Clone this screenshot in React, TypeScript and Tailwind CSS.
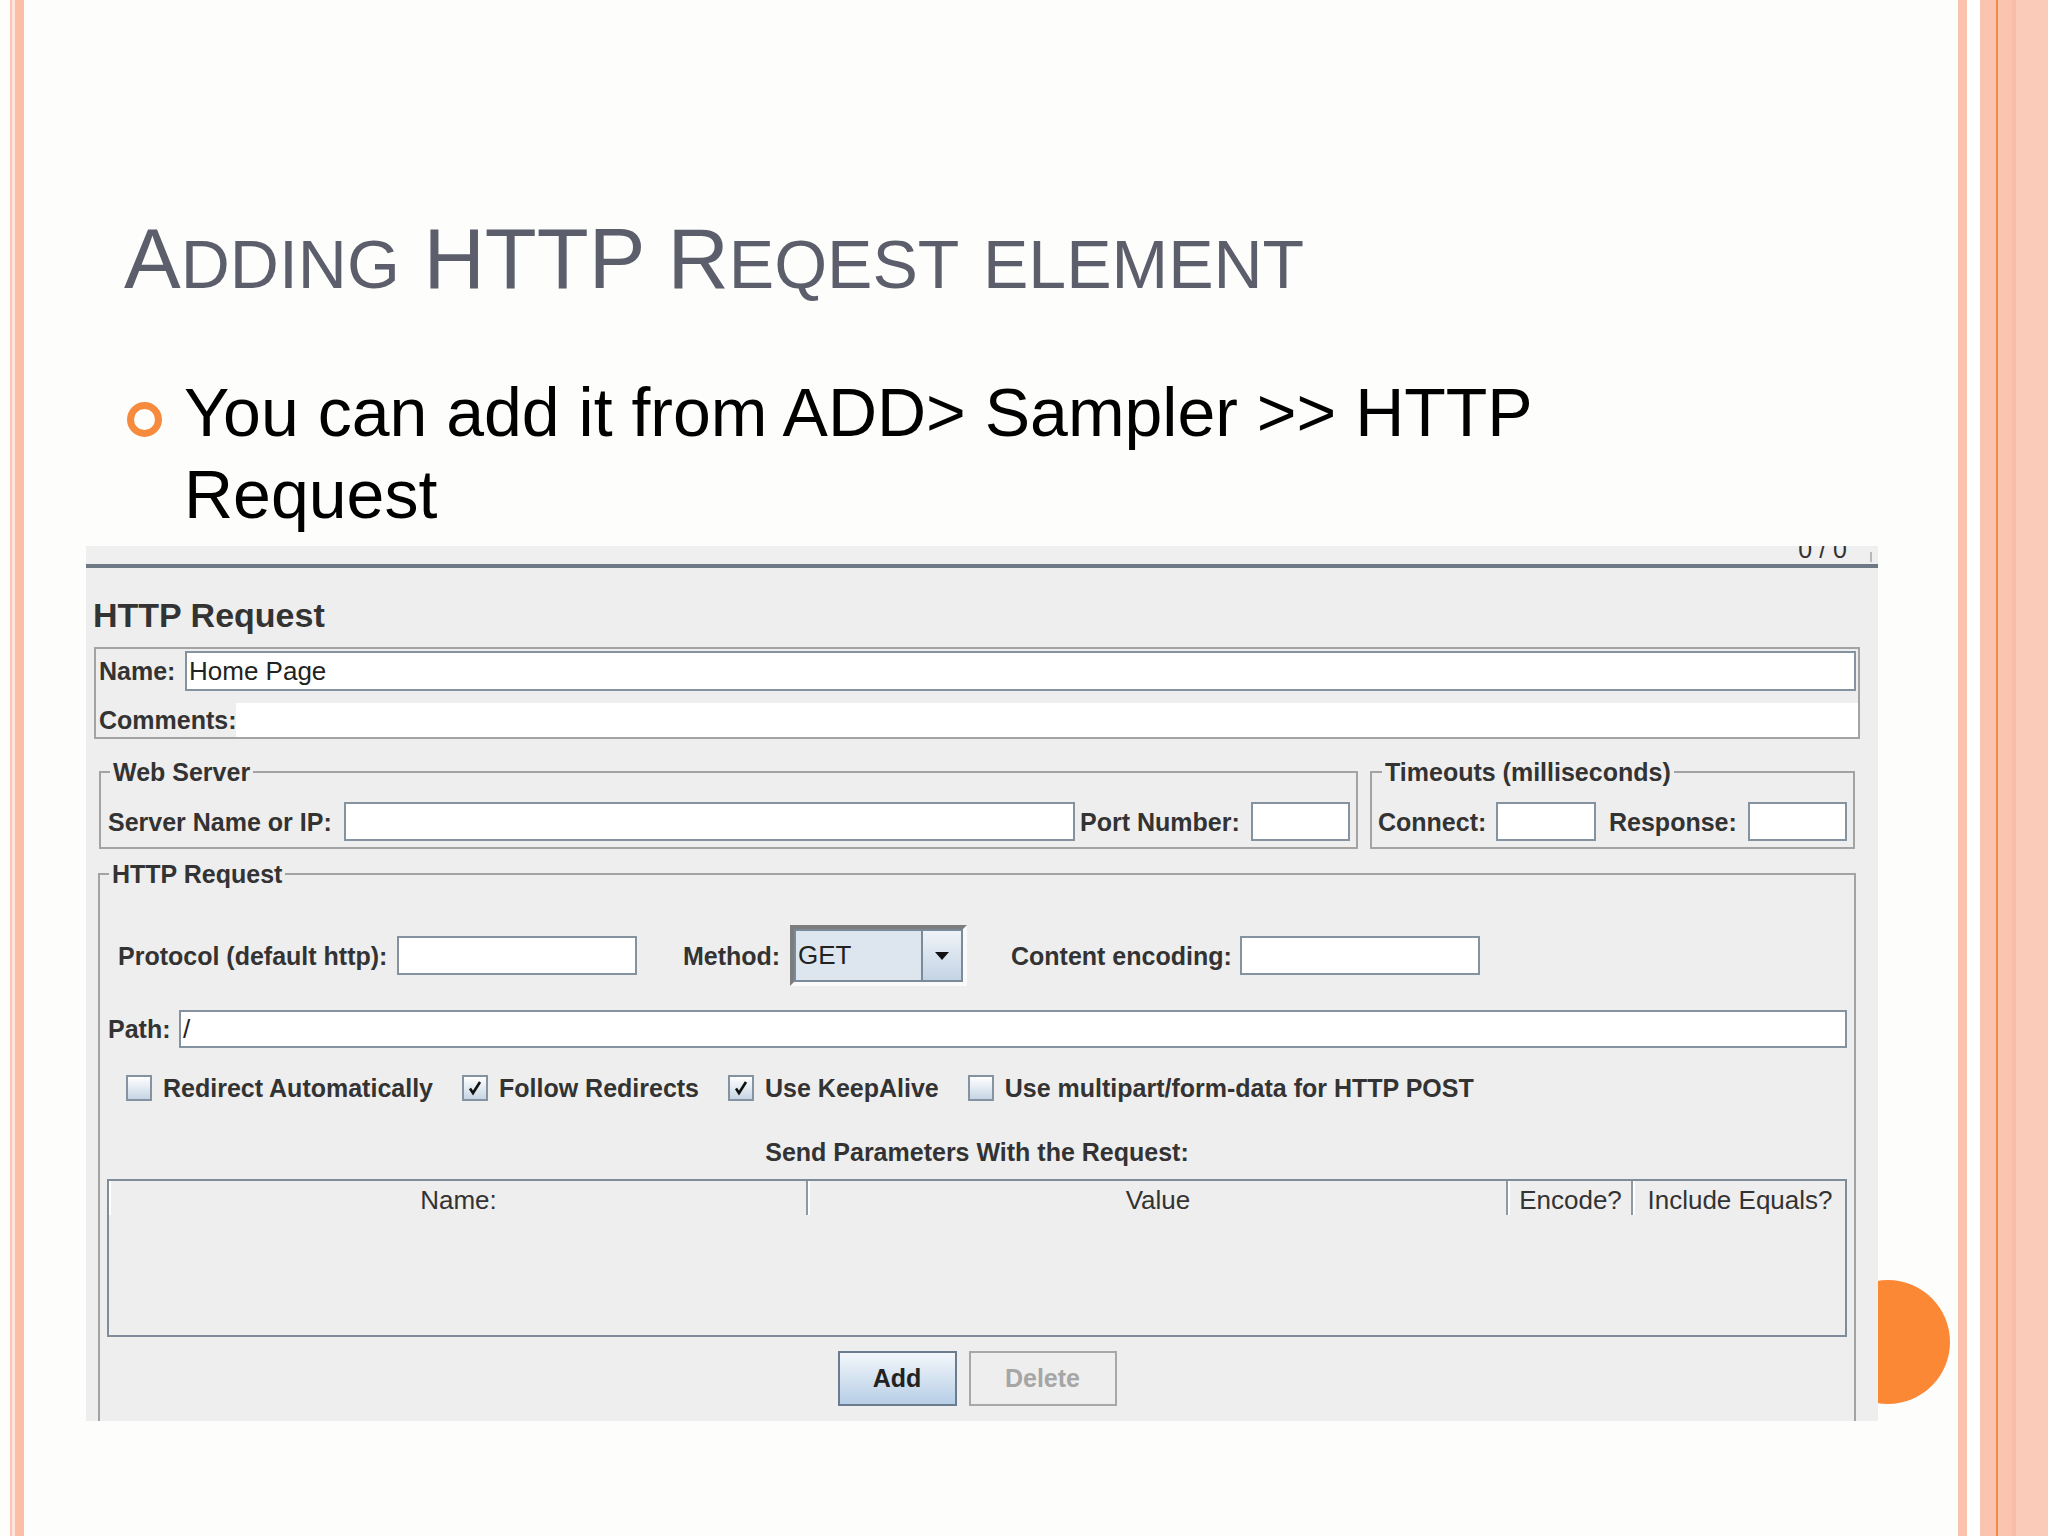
import React from "react";

const label = "text-[25px] font-bold text-[#333] leading-[30px] whitespace-nowrap";
const field = "bg-white border-2 border-[#8592a0]";

function CheckBox({ checked, text }: { checked?: boolean; text: string }) {
  return (
    <div className="flex items-center gap-[11px]">
      <div className="w-[26px] h-[26px] border-2 border-[#8592a0] bg-linear-to-b from-white to-[#c6d5e4] flex items-center justify-center">
        {checked && (
          <svg viewBox="0 0 22 22" className="w-[22px] h-[22px]">
            <path d="M6 11.5 L9 16 L16 5" stroke="#111" strokeWidth="2.6" fill="none" />
          </svg>
        )}
      </div>
      <span className={label}>{text}</span>
    </div>
  );
}

function Legend({ children, offset }: { children: React.ReactNode; offset: string }) {
  return <legend className={`${offset} px-[3px] ${label}`}>{children}</legend>;
}

function HeaderCell({ children, last }: { children: React.ReactNode; last?: boolean }) {
  return (
    <div
      className={`h-full flex items-center justify-center text-[26px] text-[#333] bg-[#eeeeee] border-l-2 border-l-white ${
        last ? "" : "border-r-2 border-r-[#8e99a4]"
      }`}
    >
      {children}
    </div>
  );
}

function JMeterPanel() {
  return (
    <div className="relative z-10 ml-[62px] mt-[11px] w-[1792px] h-[875px] shrink-0 overflow-hidden bg-[#eeeeee]">
      {/* cut-off toolbar strip */}
      <div className="h-[18px] flex justify-end overflow-hidden bg-[#efefef]">
        <span className="mt-[-9px] text-[25px] leading-none text-[#333]">0 / 0</span>
        <div className="ml-[23px] mt-[6px] w-[2px] h-[10px] bg-[#b9b9b9]" />
        <div className="w-[6px]" />
      </div>
      <div className="h-[4px] bg-[#6d7985]" />

      <h2 className="mt-[27px] pl-[7px] text-[34px] font-bold leading-[40px] text-[#333]">HTTP Request</h2>

      {/* name / comments */}
      <div className="mt-[12px] ml-[8px] mr-[18px] border-2 border-[#a3a3a3] pt-[2px]">
        <div className="flex items-center pr-[2px]">
          <span className={`${label} w-[89px] pl-[3px]`}>Name:</span>
          <div className={`${field} flex-1 h-[40px] flex items-center pl-[2px] text-[26px] text-[#222]`}>Home Page</div>
        </div>
        <div className="mt-[12px] flex items-center h-[34px]">
          <span className={`${label} w-[140px] pl-[3px]`}>Comments:</span>
          <div className="flex-1 h-full bg-white" />
        </div>
      </div>

      {/* web server + timeouts */}
      <div className="mt-[18px] ml-[13px] mr-[23px] flex gap-[12px]">
        <fieldset className="w-[1259px] border-2 border-[#a3a3a3] px-[6px] pb-[6px]">
          <Legend offset="ml-[3px]">Web Server</Legend>
          <div className="mt-[15px] flex items-center">
            <span className={`${label} w-[237px] pl-[1px]`}>Server Name or IP:</span>
            <div className={`${field} w-[731px] h-[39px]`} />
            <span className={`${label} ml-[5px] w-[171px]`}>Port Number:</span>
            <div className={`${field} w-[99px] h-[39px]`} />
          </div>
        </fieldset>
        <fieldset className="flex-1 border-2 border-[#a3a3a3] px-[6px] pb-[6px]">
          <Legend offset="ml-[4px]">Timeouts (milliseconds)</Legend>
          <div className="mt-[15px] flex items-center">
            <span className={`${label} w-[118px]`}>Connect:</span>
            <div className={`${field} w-[100px] h-[39px]`} />
            <span className={`${label} ml-[13px] w-[139px]`}>Response:</span>
            <div className={`${field} w-[99px] h-[39px]`} />
          </div>
        </fieldset>
      </div>

      {/* http request group */}
      <fieldset className="mt-[10px] ml-[12px] mr-[22px] border-2 border-b-0 border-[#a3a3a3] pb-[40px]">
        <Legend offset="ml-[9px]">HTTP Request</Legend>

        <div className="mt-[36px] pl-[18px] h-[61px] flex items-center">
          <span className={`${label} w-[279px]`}>Protocol (default http):</span>
          <div className={`${field} w-[240px] h-[39px]`} />
          <span className={`${label} ml-[46px] w-[107px]`}>Method:</span>
          <div className="w-[177px] h-[61px] border-[4px] border-t-[#7d7d7d] border-l-[#7d7d7d] border-b-[#fafafa] border-r-[#fafafa]">
            <div className="h-full flex border-2 border-[#7a8a99]">
              <div className="flex-1 bg-[#dde5ee] flex items-center pl-[2px] text-[26px] text-[#222]">GET</div>
              <div className="w-[40px] border-l-2 border-[#7a8a99] bg-linear-to-b from-[#eef3f8] to-[#c5d4e4] flex items-center justify-center">
                <svg viewBox="0 0 14 8" className="w-[14px] h-[8px]">
                  <path d="M0 0 H14 L7 8 Z" fill="#111" />
                </svg>
              </div>
            </div>
          </div>
          <span className={`${label} ml-[44px] w-[229px]`}>Content encoding:</span>
          <div className={`${field} w-[240px] h-[39px]`} />
        </div>

        <div className="mt-[24px] pl-[8px] pr-[7px] flex items-center">
          <span className={`${label} w-[71px]`}>Path:</span>
          <div className={`${field} flex-1 h-[38px] flex items-center pl-[2px] text-[26px] text-[#222]`}>/</div>
        </div>

        <div className="mt-[25px] pl-[26px] flex items-center gap-[29px]">
          <CheckBox text="Redirect Automatically" />
          <CheckBox checked text="Follow Redirects" />
          <CheckBox checked text="Use KeepAlive" />
          <CheckBox text="Use multipart/form-data for HTTP POST" />
        </div>

        <p className={`mt-[34px] text-center ${label}`}>Send Parameters With the Request:</p>

        <div className="mt-[12px] mx-[7px] h-[158px] flex flex-col border-2 border-t-0 border-[#7f8d9a]">
          <div className="h-[36px] shrink-0 grid grid-cols-[699px_700px_125px_1fr] border-t-2 border-b-[3px] border-[#7f8d9a]">
            <HeaderCell>Name:</HeaderCell>
            <HeaderCell>Value</HeaderCell>
            <HeaderCell>Encode?</HeaderCell>
            <HeaderCell last>Include Equals?</HeaderCell>
          </div>
          <div className="flex-1 bg-[#eeeeee]" />
        </div>

        <div className="mt-[14px] flex justify-center gap-[12px]">
          <button className="w-[119px] h-[55px] border-2 border-[#6a7d90] bg-linear-to-b from-[#f3f7fb] to-[#b7cee6] text-[25px] font-bold text-[#222]">
            Add
          </button>
          <button className="w-[148px] h-[55px] border-2 border-[#a8a8a8] bg-[#eeeeee] text-[25px] font-bold text-[#a6a6a6]">
            Delete
          </button>
        </div>
      </fieldset>
    </div>
  );
}

export default function App() {
  return (
    <div className="w-[2048px] h-[1536px] flex overflow-hidden bg-[#fdfdfc] font-['Liberation_Sans',Arial,sans-serif]">
      {/* left slide border */}
      <div className="w-[10px]" />
      <div className="w-[2px] bg-[#f6c5b5]" />
      <div className="w-[3px] bg-[#fde3d8]" />
      <div className="w-[9px] bg-[#fbbfa8]" />

      <main className="relative flex-1 flex flex-col">
        <h1 className="mt-[216px] pl-[100px] text-[85px] leading-none text-[#5c5f6b] whitespace-nowrap">
          A<span className="text-[68px]">DDING</span> HTTP R<span className="text-[68px]">EQEST</span>{" "}
          <span className="text-[68px]">ELEMENT</span>
        </h1>

        <div className="mt-[70px] pl-[103px] flex gap-[22px]">
          <div className="mt-[31px] w-[35px] h-[35px] shrink-0 rounded-full border-[7px] border-[#f78b3d]" />
          <p className="text-[68px] leading-[82px] text-black whitespace-nowrap">
            You can add it from ADD&gt; Sampler &gt;&gt; HTTP
            <br />
            Request
          </p>
        </div>

        <JMeterPanel />

        {/* orange disc tucked behind the screenshot */}
        <div className="absolute left-[1802px] top-[1280px] w-[124px] h-[124px] rounded-full bg-[#fb8835]" />
      </main>

      {/* right slide border */}
      <div className="w-[9px] bg-[#fbc2ad]" />
      <div className="w-[13px] bg-white" />
      <div className="w-[16px] bg-[#fbc4ae]" />
      <div className="w-[2px] bg-[#f08b45]" />
      <div className="w-[14px] bg-[#fbc4ae]" />
      <div className="w-[4px] bg-[#f8bda7]" />
      <div className="w-[32px] bg-[#f9cbb8]" />
    </div>
  );
}
